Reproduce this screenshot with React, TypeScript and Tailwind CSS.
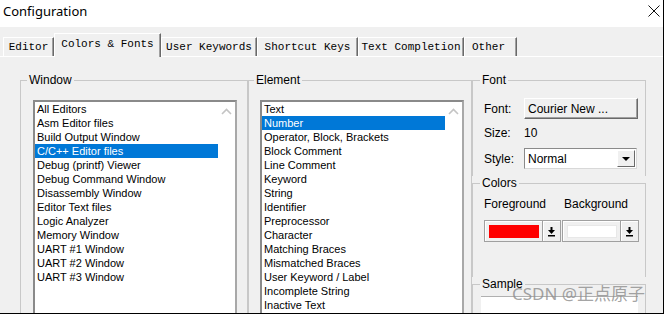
import React from "react";

const windowItems = [
  "All Editors",
  "Asm Editor files",
  "Build Output Window",
  "C/C++ Editor files",
  "Debug (printf) Viewer",
  "Debug Command Window",
  "Disassembly Window",
  "Editor Text files",
  "Logic Analyzer",
  "Memory Window",
  "UART #1 Window",
  "UART #2 Window",
  "UART #3 Window",
];

const elementItems = [
  "Text",
  "Number",
  "Operator, Block, Brackets",
  "Block Comment",
  "Line Comment",
  "Keyword",
  "String",
  "Identifier",
  "Preprocessor",
  "Character",
  "Matching Braces",
  "Mismatched Braces",
  "User Keyword / Label",
  "Incomplete String",
  "Inactive Text",
];

function Chevron() {
  return (
    <svg width="11" height="7" viewBox="0 0 11 7">
      <path d="M1 6 L5.5 1.5 L10 6" fill="none" stroke="#c4c4c4" strokeWidth="1.6" />
    </svg>
  );
}

function ListBox({ items, selected }: { items: string[]; selected: number }) {
  return (
    <div className="w-[204px] h-[240px] bg-white border-2 border-t-[#8a8a8a] border-l-[#8a8a8a] border-r-[#a8a8a8] border-b-[#a8a8a8] flex">
      <div className="flex-1 flex flex-col">
        {items.map((t, i) => (
          <div
            key={t}
            className={
              "h-[14px] leading-[14px] pl-[2px] text-[11px] whitespace-nowrap " +
              (i === selected ? "bg-[#0078d7] text-white" : "text-black")
            }
          >
            {t}
          </div>
        ))}
      </div>
      <div className="w-[17px] flex justify-center pt-[6px]">
        <Chevron />
      </div>
    </div>
  );
}

function DropArrow() {
  return (
    <svg width="9" height="11" viewBox="0 0 9 11">
      <path d="M3.5 1 H5.5 V4 H8 L4.5 8 L1 4 H3.5 Z" fill="#000" />
      <rect x="1" y="9" width="7" height="1.5" fill="#000" />
    </svg>
  );
}

function ColorPicker({ color }: { color: string }) {
  return (
    <div className="w-[77px] h-[22px] border border-[#a0a0a0] bg-[#f0f0f0] flex shadow-[inset_1px_1px_0_#ffffff]">
      <div className="flex-1 pl-[4px] pt-[4px] pr-[3px]">
        <div
          className={"h-[13px] w-full " + (color === "red" ? "bg-[#ff0000]" : "bg-white border border-[#e8e8e8]")}
        />
      </div>
      <div className="w-[18px] border-l border-[#a0a0a0] flex items-center justify-center shadow-[inset_1px_1px_0_#ffffff]">
        <DropArrow />
      </div>
    </div>
  );
}

function Tab({ label, w, selected, extra }: { label: string; w: string; selected?: boolean; extra?: string }) {
  return (
    <div
      className={
        w +
        " flex justify-center whitespace-pre border-t border-l border-white border-r border-r-[#696969] shadow-[inset_-1px_0_0_#a0a0a0] " +
        (selected ? "h-[24px] pt-[3px] -mb-px relative z-10 bg-[#f0f0f0] " : "h-[19px] pt-[2px] ") +
        (extra || "")
      }
      style={{ fontFamily: '"Liberation Mono", monospace' }}
    >
      <span className="text-[11px] leading-[14px] text-black">{label}</span>
    </div>
  );
}

export default function App() {
  return (
    <div
      className="relative w-[664px] h-[314px] overflow-hidden bg-[#f0f0f0] border-r border-b border-black flex flex-col text-black"
      style={{ fontFamily: '"Liberation Sans", Arial, sans-serif' }}
    >
      {/* title bar */}
      <div className="h-[27px] bg-white flex justify-between pl-[3px] pr-[3px] shrink-0">
        <span className="text-[13px] leading-[20px] pt-[1px] text-black" style={{ fontFamily: '"Noto Sans", sans-serif' }}>
          Configuration
        </span>
        <svg width="12" height="12" viewBox="0 0 12 12" className="mt-[5px]">
          <path d="M0.5 0.5 L11.5 11.5 M11.5 0.5 L0.5 11.5" stroke="#111" strokeWidth="1" />
        </svg>
      </div>

      {/* tabs */}
      <div className="h-[29px] shrink-0 flex items-end pl-[3px]">
        <Tab label="Editor" w="w-[51px]" />
        <Tab label="Colors & Fonts" w="w-[107px]" selected />
        <Tab label="User Keywords" w="w-[96px]" />
        <Tab label="Shortcut Keys" w="w-[101px]" />
        <Tab label="Text Completion" w="w-[106px]" />
        <Tab label="Other" w="w-[53px]" extra="!justify-start pl-[7px]" />
      </div>

      {/* tab page */}
      <div className="flex-1 min-h-0 border-t border-white flex items-start pl-[20px] pt-[16px] text-[12px]">
        {/* Window */}
        <fieldset className="w-[228px] border border-[#c8c8c8] pl-[12px] shrink-0">
          <legend className="-ml-[6px] px-[2px] leading-[14px]">Window</legend>
          <div className="pt-[13px]">
            <ListBox items={windowItems} selected={3} />
          </div>
        </fieldset>

        {/* Element */}
        <fieldset className="w-[224px] border border-[#c8c8c8] pl-[11px] shrink-0">
          <legend className="-ml-[6px] px-[2px] leading-[14px]">Element</legend>
          <div className="pt-[13px]">
            <ListBox items={elementItems} selected={1} />
          </div>
        </fieldset>

        {/* Right column */}
        <div className="w-[174px] flex flex-col shrink-0">
          <fieldset className="border border-b-0 border-[#c8c8c8] pl-[11px] pb-[7px]">
            <legend className="-ml-[4px] px-[2px] leading-[14px]">Font</legend>
            <div className="mt-[11px] h-[21px] flex items-center">
              <span className="w-[40px]">Font:</span>
              <div className="w-[114px] h-[21px] bg-[#f0f0f0] border border-t-white border-l-white border-r-[#696969] border-b-[#696969] shadow-[inset_-1px_-1px_0_#a0a0a0] flex items-center pl-[3px] leading-[14px]">
                Courier New ...
              </div>
            </div>
            <div className="mt-[7px] h-[14px] flex items-center leading-[14px]">
              <span className="w-[40px]">Size:</span>
              <span>10</span>
            </div>
            <div className="mt-[8px] h-[21px] flex items-center">
              <span className="w-[40px]">Style:</span>
              <div className="w-[113px] h-[21px] bg-white border border-t-[#8a8a8a] border-l-[#8a8a8a] border-r-[#d8d8d8] border-b-[#d8d8d8] flex items-center">
                <span className="flex-1 pl-[3px] leading-[14px]">Normal</span>
                <div className="w-[18px] h-[17px] mr-[1px] bg-[#f0f0f0] border border-t-white border-l-white border-r-[#696969] border-b-[#696969] flex items-center justify-center">
                  <svg width="8" height="4" viewBox="0 0 8 4">
                    <path d="M0 0 H8 L4 4 Z" fill="#000" />
                  </svg>
                </div>
              </div>
            </div>
          </fieldset>

          <fieldset className="border border-b-0 border-[#c8c8c8] pl-[11px] pb-[35px]">
            <legend className="-ml-[4px] px-[2px] leading-[14px]">Colors</legend>
            <div className="mt-[7px] h-[14px] flex leading-[14px]">
              <span className="w-[80px]">Foreground</span>
              <span>Background</span>
            </div>
            <div className="mt-[9px] flex gap-[1px]">
              <ColorPicker color="red" />
              <ColorPicker color="white" />
            </div>
          </fieldset>

          <fieldset className="border border-b-0 border-[#c8c8c8] pl-[8px]">
            <legend className="-ml-[1px] px-[2px] leading-[14px]">Sample</legend>
            <div className="mt-[5px] w-[157px] h-[40px] bg-white border-t border-[#b0b0b0]" />
          </fieldset>
        </div>
      </div>

      {/* watermark */}
      <div
        className="absolute left-[512px] top-[284px] text-[17px] leading-[20px] text-[#8c8c8c]/80 whitespace-nowrap"
        style={{ fontFamily: '"Noto Sans", "Noto Sans CJK SC", sans-serif' }}
      >
        CSDN @正点原子
      </div>
    </div>
  );
}
